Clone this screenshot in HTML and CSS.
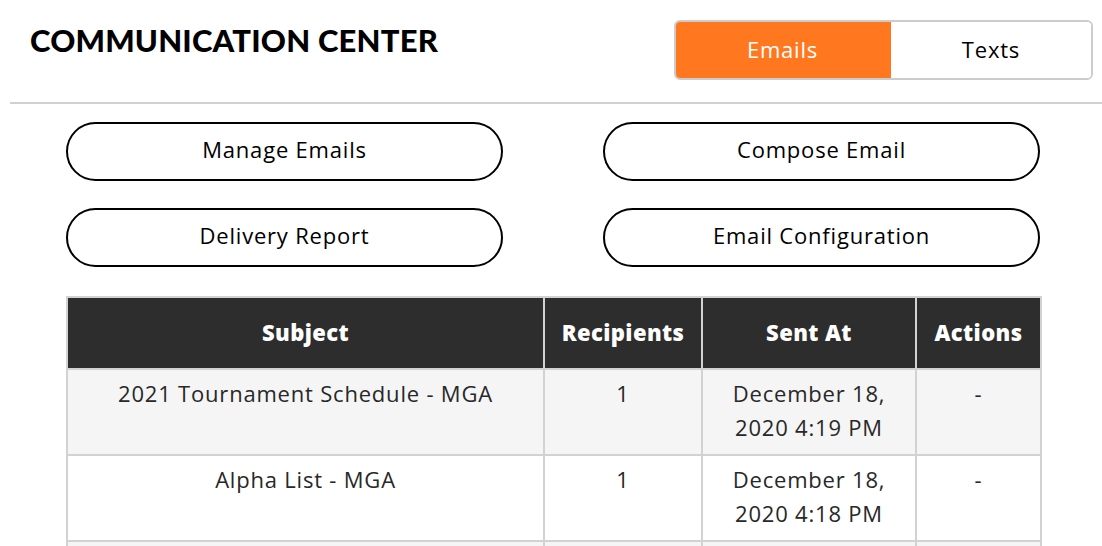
FILE: index.html
```html
<!DOCTYPE html>
<html>
<head>
  <meta charset="UTF-8">
  <title>Communication Center</title>
  <link rel="stylesheet" href="styles.css">
</head>
<body>
  <div class="top-bar">
    <h1>COMMUNICATION CENTER</h1>
    <div class="toggle">
      <div class="toggle-item active">Emails</div>
      <div class="toggle-item">Texts</div>
    </div>
  </div>

  <div class="main-contents">
    <div class="actions">
      <div class="pill">Manage Emails</div>
      <div class="pill">Compose Email</div>
      <div class="pill">Delivery Report</div>
      <div class="pill">Email Configuration</div>
    </div>

    <table class="emails">
      <colgroup>
        <col class="c-subject">
        <col class="c-recipients">
        <col class="c-sent">
        <col class="c-actions">
      </colgroup>
      <thead>
        <tr>
          <th>Subject</th>
          <th>Recipients</th>
          <th>Sent At</th>
          <th>Actions</th>
        </tr>
      </thead>
      <tbody>
        <tr class="odd">
          <td>2021 Tournament Schedule - MGA</td>
          <td>1</td>
          <td>December 18,<br>2020 4:19 PM</td>
          <td>-</td>
        </tr>
        <tr>
          <td>Alpha List - MGA</td>
          <td>1</td>
          <td>December 18,<br>2020 4:18 PM</td>
          <td>-</td>
        </tr>
        <tr class="odd">
          <td>&nbsp;</td>
          <td>&nbsp;</td>
          <td>&nbsp;</td>
          <td>&nbsp;</td>
        </tr>
      </tbody>
    </table>
  </div>
</body>
</html>
```

FILE: styles.css
```css
* {
  box-sizing: border-box;
}
body {
  margin: 0;
  font-family: "Open Sans", Lato, sans-serif;
  font-size: 22px;
  letter-spacing: 0.8px;
  color: rgb(34, 34, 34);
  background-color: #fff;
  overflow: hidden;
}
.top-bar {
  display: flex;
  justify-content: space-between;
  align-items: flex-start;
  margin-left: 10px;
  padding: 20px 9px 22px 20px;
  border-bottom: 2px solid rgb(208, 208, 208);
}
h1 {
  margin: 1px 0 0 0;
  font-family: Lato, sans-serif;
  font-size: 31px;
  font-weight: 900;
  color: #000;
  letter-spacing: 0.2px;
}
.toggle {
  display: flex;
  width: 419px;
  height: 60px;
  border: 2px solid rgb(204, 204, 204);
  border-radius: 6px;
  overflow: hidden;
}
.toggle-item {
  flex: 1;
  display: flex;
  align-items: center;
  justify-content: center;
  padding-bottom: 2px;
  color: #000;
  background-color: #fff;
}
.toggle-item.active {
  flex: 0 0 217px;
  margin: -2px 0 -2px -2px;
  background-color: rgb(255, 120, 32);
  color: #fff;
}
.main-contents {
  width: 974px;
  margin-left: 66px;
}
.actions {
  display: grid;
  grid-template-columns: 437px 437px;
  column-gap: 100px;
  row-gap: 27px;
  margin-top: 18px;
}
.pill {
  height: 59px;
  border: 2px solid #000;
  border-radius: 30px;
  display: flex;
  align-items: center;
  justify-content: center;
  padding-bottom: 5px;
  color: #000;
}
.emails {
  width: 974px;
  margin-top: 29px;
  border-collapse: collapse;
  table-layout: fixed;
  border: 2px solid rgb(210, 210, 210);
}
.c-subject { width: 477px; }
.c-recipients { width: 158px; }
.c-sent { width: 214px; }
.c-actions { width: 125px; }
.emails th,
.emails td {
  border: 2px solid rgb(210, 210, 210);
  text-align: center;
  font-size: 22px;
}
.emails th {
  height: 72px;
  padding-bottom: 3px;
  background-color: rgb(45, 45, 45);
  color: #fff;
  font-weight: 800;
  letter-spacing: 0.4px;
}
.emails td {
  vertical-align: top;
  padding: 6px 2px 10px;
  line-height: 34px;
  color: rgb(40, 40, 40);
}
.emails tr.odd td {
  background-color: rgb(245, 245, 245);
}
```
